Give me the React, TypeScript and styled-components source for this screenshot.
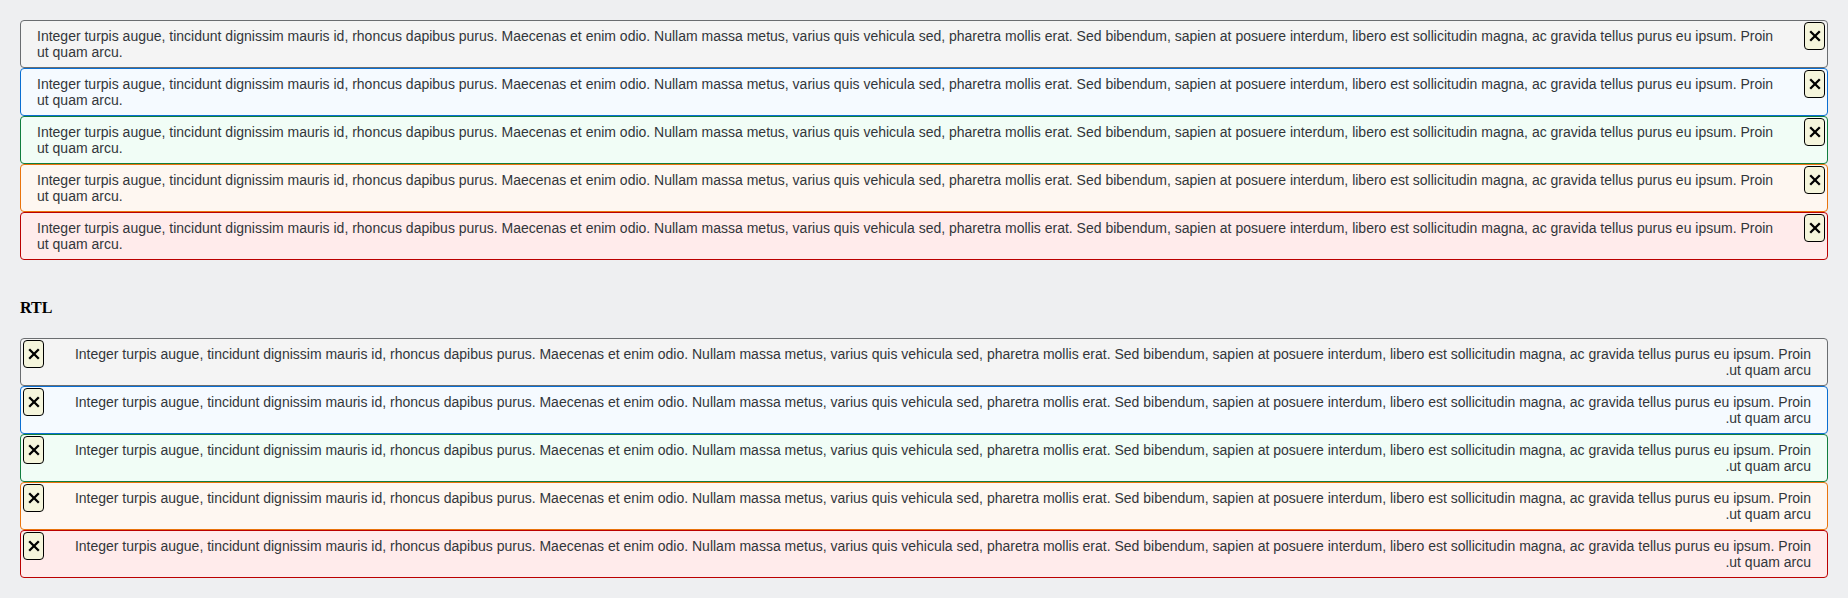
import styled, { createGlobalStyle } from "styled-components"

const GlobalStyle = createGlobalStyle`
  html, body {
    margin: 0;
    background: #eeeff1;
  }
  body {
    font-family: "Liberation Serif", serif;
  }
`

type Design = "neutral" | "info" | "success" | "warning" | "error"

const colors: Record<Design, { bg: string; border: string }> = {
  neutral: { bg: "#f4f4f4", border: "#6a6d70" },
  info: { bg: "#f5faff", border: "#0a6ed1" },
  success: { bg: "#f1fdf6", border: "#107e3e" },
  warning: { bg: "#fef7f1", border: "#e9730c" },
  error: { bg: "#ffebeb", border: "#bb0000" },
}

const designs: Design[] = ["neutral", "info", "success", "warning", "error"]

const TEXT =
  "Integer turpis augue, tincidunt dignissim mauris id, rhoncus dapibus purus. Maecenas et enim odio. Nullam massa metus, varius quis vehicula sed, pharetra mollis erat. Sed bibendum, sapien at posuere interdum, libero est sollicitudin magna, ac gravida tellus purus eu ipsum. Proin ut quam arcu."

const CloseIcon = () => (
  <svg width="12" height="12" viewBox="0 0 12 12">
    <path d="M1.2 1.2 L10.8 10.8 M10.8 1.2 L1.2 10.8" stroke="#000" strokeWidth="2.3" fill="none" />
  </svg>
)

const MessageStrip = ({ design }: { design: Design }) => (
  <Strip $design={design}>
    <Text>{TEXT}</Text>
    <CloseButton aria-label="Close">
      <CloseIcon />
    </CloseButton>
  </Strip>
)

export default function App() {
  return (
    <>
      <GlobalStyle />
      <Page>
        <Group>
          {designs.map((d) => (
            <MessageStrip key={d} design={d} />
          ))}
        </Group>
        <Heading>RTL</Heading>
        <Group dir="rtl">
          {designs.map((d) => (
            <MessageStrip key={d} design={d} />
          ))}
        </Group>
      </Page>
    </>
  )
}

const Page = styled.div`
  padding: 20px 20px 0;
`
const Group = styled.div`
  display: flex;
  flex-direction: column;
`
const Heading = styled.h4`
  font-family: "Liberation Serif", serif;
  font-size: 16px;
  font-weight: 700;
  line-height: 18px;
  margin: 39px 0 21px;
  color: #000;
`
const Strip = styled.div<{ $design: Design }>`
  position: relative;
  box-sizing: border-box;
  min-height: 48px;
  padding: 7px 40px 7px 16px;
  background: ${(p) => colors[p.$design].bg};
  border: 1px solid ${(p) => colors[p.$design].border};
  border-radius: 4px;
  [dir="rtl"] & {
    padding: 7px 16px 7px 40px;
  }
`
const Text = styled.div`
  font-family: "Liberation Sans", Arial, sans-serif;
  font-size: 14px;
  line-height: 16px;
  color: #32363a;
`
const CloseButton = styled.button`
  position: absolute;
  top: 1px;
  inset-inline-end: 2px;
  width: 21px;
  height: 28px;
  padding: 0;
  display: flex;
  align-items: center;
  justify-content: center;
  background: #f5f5dc;
  border: 1px solid #000;
  border-radius: 4px;
  cursor: pointer;
`
